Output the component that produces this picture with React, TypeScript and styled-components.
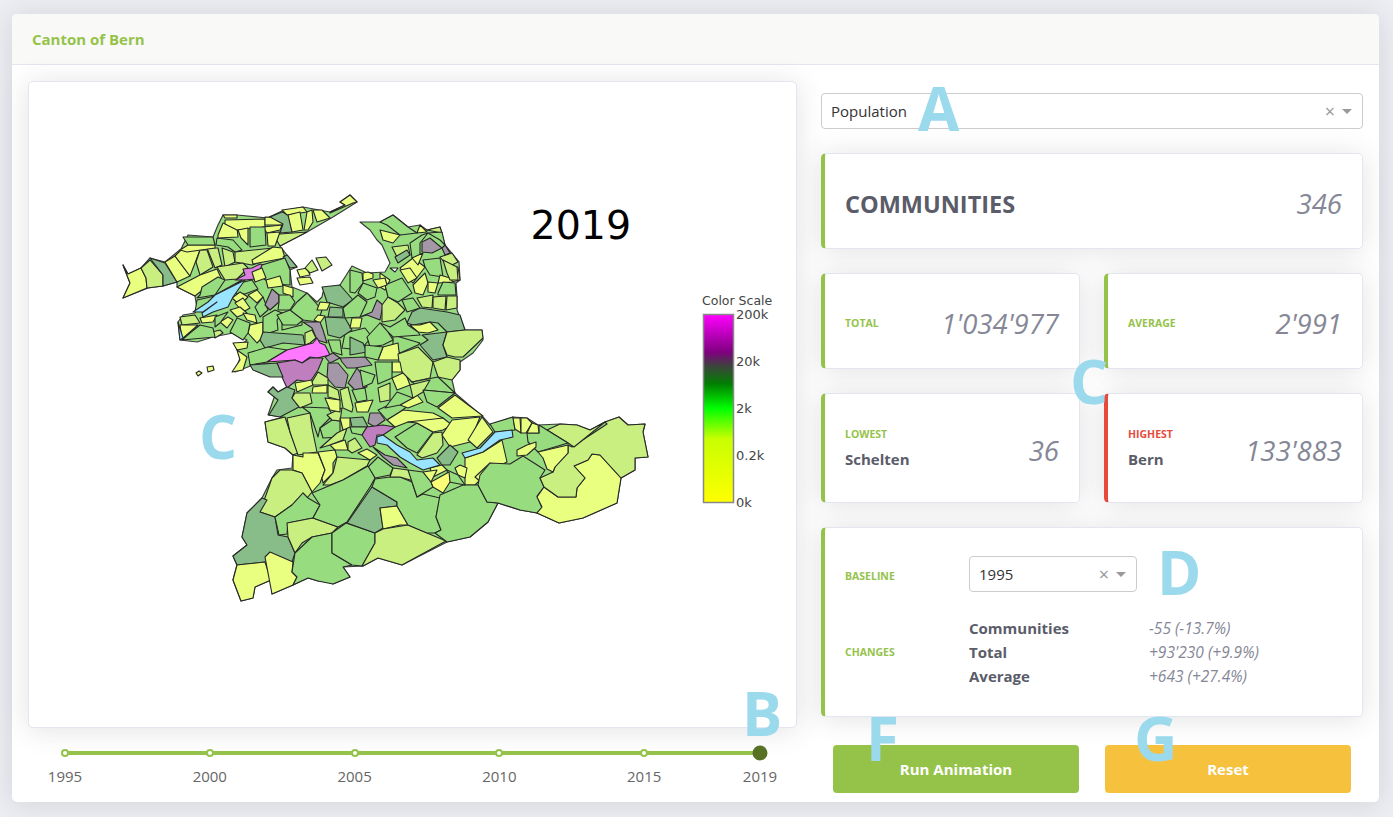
import React from 'react'
import styled, { createGlobalStyle } from 'styled-components'

const GREEN = '#95c34a'
const SANS = '"Open Sans", "Noto Sans", sans-serif'

const FILL: Record<string, string> = {
  y: '#e8ff80',
  b: '#fbff78',
  l: '#c8ef80',
  g: '#98dc80',
  d: '#88bc88',
  p: '#a498a8',
  m: '#bf7fbf',
  o: '#dc80e0',
  f: '#ff78ff',
  w: '#99e4ff',
  x: '#ffffff',
}

const OUTLINE =
  '123,265 128,274 141,268 150,258 165,262 181,249 188,235 213,237 218,225 223,215 237,215 267,218 282,211 303,207 330,212 345,205 340,202 350,195 357,202 333,217 307,232 280,246 287,255 297,267 290,270 292,287 307,293 317,302 322,297 323,292 340,285 352,266 367,273 385,272 390,263 382,245 377,240 370,230 360,222 380,222 393,215 408,227 420,225 427,230 440,227 445,245 459,262 460,280 456,283 457,297 457,310 465,330 482,330 483,340 473,353 460,362 460,370 452,380 455,393 483,417 490,425 513,417 527,418 538,425 560,424 577,425 590,430 605,422 619,417 628,425 645,424 643,432 648,457 635,458 635,470 621,478 617,503 583,518 559,523 537,513 520,510 498,503 488,522 470,537 447,542 402,565 378,558 363,566 343,567 350,577 333,584 328,582 318,581 308,578 293,585 272,594 271,580 255,587 253,598 241,601 233,580 237,565 233,556 247,545 242,537 247,513 262,498 272,478 277,470 292,468 293,455 285,448 268,442 265,422 283,417 268,415 275,395 268,392 273,387 278,392 287,387 285,373 280,365 260,363 253,365 235,372 240,358 237,348 247,340 233,333 213,337 197,342 180,340 178,322 183,315 195,313 197,308 195,296 177,287 177,282 163,286 148,288 123,298 130,283'

const CELLS: [string, string][] = [
  // Jura
  ['y', '123,265 128,274 141,268 146,278 147,288 123,298 130,283'],
  ['l', '141,268 150,260 163,275 163,286 147,288 146,278'],
  ['d', '150,258 165,263 177,282 163,286 163,275'],
  ['y', '165,262 175,256 190,276 177,282'],
  ['y', '175,256 181,250 200,250 190,276'],
  ['l', '200,250 207,250 213,267 200,275 196,262'],
  ['l', '207,248 218,248 222,265 215,268'],
  ['l', '222,248 233,252 235,262 225,267'],
  ['y', '180,250 188,245 215,245 215,248 187,252'],
  ['g', '183,237 213,237 215,245 188,245'],
  ['g', '217,238 233,240 242,250 235,252 228,247 216,245'],
  ['y', '218,235 223,223 237,228 238,237 218,238'],
  ['y', '223,215 237,215 237,218 225,218'],
  ['y', '225,220 265,219 265,227 237,230 225,224'],
  ['y', '265,217 285,218 283,225 265,225'],
  ['y', '263,227 282,225 280,230 267,233'],
  ['d', '270,217 282,212 289,215 292,232 280,233 283,224'],
  ['y', '282,210 303,207 307,212 287,215'],
  ['y', '288,215 300,212 303,230 292,232'],
  ['y', '307,212 312,210 313,222 308,230 304,230'],
  ['y', '313,210 322,210 330,218 317,222'],
  ['y', '330,213 353,203 357,202 350,195 340,202 345,205 330,212'],
  ['l', '280,234 307,232 280,246 273,234'],
  ['g', '250,227 265,227 266,245 250,247'],
  ['y', '238,230 248,228 248,245 241,238'],
  ['y', '267,233 280,232 275,246 268,246'],
  ['l', '235,252 273,248 275,257 252,265 235,262'],
  ['y', '273,247 282,248 285,258 253,264 252,260'],
  ['d', '287,255 297,267 290,268 283,257'],
  ['y', '177,287 200,275 217,269 222,280 200,292 195,296'],
  ['g', '200,295 202,287 218,277 225,280 215,295 197,298'],
  ['l', '217,267 243,263 248,268 237,279 225,280'],
  ['o', '235,280 245,275 243,269 252,268 260,264 269,266 265,273 255,279 245,280'],
  ['l', '215,295 242,280 228,293 217,296'],
  ['g', '197,300 215,296 205,308 195,312'],
  // Exclave and Seeland
  ['y', '297,270 307,268 310,275 300,277'],
  ['y', '297,278 310,277 313,283 300,285'],
  ['l', '305,268 312,260 318,270 310,273'],
  ['l', '316,258 326,257 332,265 322,271'],
  ['g', '262,265 285,258 290,270 290,285 272,284 258,275'],
  ['y', '252,272 262,268 266,278 255,282'],
  ['y', '266,280 280,276 283,286 268,288'],
  ['g', '236,284 252,280 258,289 245,294 233,293'],
  ['y', '232,298 240,292 248,297 240,305'],
  ['y', '235,303 243,298 250,308 243,312'],
  ['y', '248,295 257,290 263,297 257,303'],
  ['y', '230,310 240,307 247,313 237,317'],
  ['g', '255,307 263,297 268,310 260,317'],
  ['y', '243,313 255,315 257,323 247,320'],
  ['y', '228,317 233,320 227,328 220,322'],
  ['l', '212,332 220,330 223,333 215,338'],
  ['l', '180,317 195,315 200,323 182,325'],
  ['y', '180,325 198,325 182,339'],
  ['g', '200,325 213,328 215,337 182,340 190,333'],
  ['y', '200,318 217,315 213,322 202,323'],
  ['g', '215,317 228,312 220,323 215,327'],
  ['y', '250,325 263,322 263,337 257,343 248,333'],
  ['g', '237,318 250,323 248,333 243,340 230,332'],
  ['g', '263,317 275,310 282,313 277,320 278,330 263,335 263,323'],
  ['g', '282,313 302,314 302,325 282,330'],
  ['y', '233,343 248,342 247,348 237,350'],
  ['y', '237,350 247,357 243,370 232,372 240,360'],
  ['y', '196,373 199,371 202,373 198,376'],
  ['y', '207,367 213,366 214,370 208,372'],
  // Bern area
  ['p', '272,289 279,295 279,302 270,310 265,305'],
  ['y', '283,285 293,288 293,297 283,293'],
  ['g', '279,295 290,295 295,302 290,310 278,310 279,302'],
  ['g', '297,302 307,293 322,310 318,322 303,320 290,311'],
  ['d', '322,287 340,285 353,300 343,307 327,302'],
  ['d', '330,307 343,308 343,317 328,317'],
  ['y', '320,302 330,303 327,310 317,310'],
  ['y', '318,315 325,316 320,323 314,320'],
  ['p', '303,322 320,322 323,330 327,343 317,340 312,328'],
  ['g', '277,315 290,310 303,320 297,325 283,325'],
  ['d', '263,332 303,335 305,345 283,343 265,348 260,340'],
  ['l', '305,333 312,330 316,338 310,343 305,345'],
  ['g', '248,353 268,347 287,350 267,362 250,365'],
  ['f', '267,362 287,350 313,343 317,338 320,343 325,345 330,355 317,358 310,357 302,363 295,360'],
  ['m', '277,363 295,360 302,363 310,358 323,358 318,370 310,382 297,380 287,388 282,377'],
  ['d', '250,365 277,363 283,377 270,377 253,370'],
  ['p', '328,363 338,363 348,375 345,388 335,387 327,378'],
  ['p', '325,357 333,353 340,358 330,363'],
  ['p', '342,362 340,358 365,357 372,365 355,368 347,368'],
  ['p', '348,383 357,368 362,375 367,387 355,390'],
  ['g', '345,333 365,328 372,337 360,350 342,348'],
  ['d', '325,317 345,318 352,330 340,338 328,335'],
  ['g', '328,340 340,340 342,355 332,352'],
  ['g', '343,308 358,295 367,302 360,317 345,318'],
  ['y', '352,318 362,318 360,328 350,328'],
  // Centre
  ['d', '268,392 273,387 278,392 287,387 295,390 292,398 299,407 280,417 269,415 278,400'],
  ['l', '295,393 310,393 312,403 300,408 292,398'],
  ['y', '295,383 312,380 313,385 297,392'],
  ['l', '312,382 318,372 328,378 328,385 313,385'],
  ['y', '313,387 327,385 327,393 312,393'],
  ['g', '302,407 328,408 333,415 320,428 318,437 310,413'],
  ['g', '320,428 332,420 340,421 340,437 323,438'],
  ['l', '327,415 342,408 340,421 332,420'],
  ['l', '340,390 348,387 353,407 352,412 343,408'],
  ['l', '328,385 338,390 340,400 328,397'],
  ['y', '325,398 340,400 340,412 330,410'],
  ['g', '352,390 365,388 367,400 357,402'],
  ['y', '355,403 373,400 368,412 357,412'],
  ['g', '360,370 375,375 372,383 363,387'],
  ['l', '378,388 390,383 390,400 380,402'],
  ['l', '320,448 337,433 347,428 343,440 330,445'],
  ['y', '330,445 345,440 348,450 335,450'],
  ['l', '348,442 355,438 362,448 352,453 348,450'],
  ['y', '358,453 367,449 377,455 370,460'],
  ['d', '350,418 363,417 368,427 352,427'],
  ['g', '350,427 367,427 362,435 352,433'],
  ['y', '340,418 350,418 350,427 343,430'],
  ['g', '378,410 400,400 413,402 400,412 387,420'],
  ['y', '387,420 403,410 433,413 443,418 423,422 408,422 395,427'],
  ['y', '400,405 417,395 423,402 408,408'],
  ['y', '392,378 405,372 410,385 397,390'],
  // North east
  ['g', '380,222 393,215 408,227 417,233 400,235 387,225'],
  ['y', '417,233 420,225 427,232'],
  ['l', '427,230 440,227 442,233'],
  ['g', '428,233 442,232 445,245 440,240'],
  ['p', '422,242 430,238 442,248 432,253 422,252'],
  ['p', '442,248 445,245 450,253 445,255'],
  ['g', '410,243 422,235 428,233 420,243 420,257 412,258'],
  ['y', '380,230 400,235 393,243 383,240'],
  ['l', '392,247 408,245 410,255 397,257'],
  ['d', '395,257 407,250 410,255 398,263'],
  ['l', '440,257 452,253 458,262 448,267'],
  ['g', '423,260 440,258 443,277 430,275 425,267'],
  ['y', '448,268 458,267 460,280 451,282'],
  ['y', '400,268 413,258 425,267 413,283 407,277'],
  ['y', '412,258 423,253 418,265'],
  ['y', '380,273 390,280 385,290 380,287'],
  ['x', '390,268 398,268 395,272'],
  // Emmental
  ['p', '360,317 372,312 377,300 383,305 380,320 367,315'],
  ['l', '382,305 388,297 398,303 405,310 395,320 382,322'],
  ['g', '385,285 402,278 412,293 398,302 388,297'],
  ['g', '363,283 377,288 375,297 367,300 358,293'],
  ['y', '373,280 385,278 387,285 378,288'],
  ['y', '363,273 368,272 373,274 373,278 363,281'],
  ['g', '350,270 362,273 363,283 355,293 350,292'],
  ['y', '410,268 417,278 408,283 400,270'],
  ['y', '413,285 425,273 428,283 423,295 415,293'],
  ['y', '428,282 438,283 435,293 428,292'],
  ['y', '440,275 450,278 453,282 438,283'],
  ['l', '443,260 457,267 458,280 450,280 447,273'],
  ['g', '438,293 443,282 455,283 456,295 438,295'],
  ['l', '433,297 446,296 445,310 433,308'],
  ['l', '447,296 457,296 457,308 446,310'],
  ['l', '417,298 433,295 432,308 422,307'],
  ['g', '402,300 413,298 420,308 407,312'],
  ['d', '407,323 412,312 420,308 447,312 460,315 465,330 447,332 438,323 430,322 413,325'],
  ['y', '410,325 420,325 430,322 438,330 428,333 418,332'],
  ['d', '422,335 447,332 443,345 447,357 433,360 420,345 428,340'],
  ['l', '447,332 465,330 482,330 483,338 463,357 455,357 447,355 443,345'],
  ['g', '393,335 420,343 418,345 400,353 393,347'],
  ['g', '380,323 390,327 405,318 408,325 418,332 420,335 393,337 388,332'],
  ['d', '350,337 363,343 367,352 350,355'],
  ['g', '367,337 380,323 388,332 393,340 383,345 370,347'],
  ['y', '383,347 398,343 400,360 378,360'],
  ['l', '398,354 418,347 433,362 430,378 412,382 400,370'],
  ['l', '447,357 460,360 460,370 452,380 438,377 433,362'],
  ['g', '412,382 438,377 455,393 423,390'],
  ['y', '392,362 400,362 402,372 392,372'],
  ['g', '365,345 383,347 378,360 365,357'],
  ['g', '375,362 392,362 392,378 378,384'],
  ['l', '410,385 430,380 423,392 413,398'],
  ['g', '397,392 413,398 400,405 385,408'],
  // Thun and the Oberland
  ['g', '395,437 417,423 433,432 417,453 407,448'],
  ['y', '408,422 443,418 452,425 443,430 433,432 417,423'],
  ['l', '417,455 433,433 442,432 443,445 437,453 422,458'],
  ['y', '442,435 452,420 480,417 470,442 450,447'],
  ['g', '423,390 455,393 437,407 427,402'],
  ['y', '438,408 455,395 483,416 452,418'],
  ['y', '482,417 493,432 477,448 468,440'],
  ['g', '490,424 513,417 515,430 495,432'],
  ['d', '437,458 450,445 458,452 450,465 442,465'],
  ['y', '430,468 442,465 447,470 433,477'],
  ['y', '465,458 483,452 502,440 507,462 490,470 475,485 465,485'],
  ['y', '455,468 460,465 467,468 465,478 458,475'],
  ['y', '475,477 490,463 490,473 482,483'],
  ['g', '368,467 378,457 393,468 390,475 375,478'],
  ['p', '370,413 380,413 385,420 375,427 368,423'],
  ['m', '362,435 367,427 383,425 395,427 383,435 377,435 375,445 370,447'],
  ['p', '373,447 385,455 397,458 407,468 393,465 383,457'],
  ['l', '265,422 285,417 290,432 298,453 293,455 285,448 268,442'],
  ['l', '287,418 310,413 312,428 317,452 298,455 290,432'],
  ['y', '293,455 303,457 303,453 318,453 325,470 320,483 312,492 302,473 293,470'],
  ['y', '318,452 335,450 337,457 333,463 333,473 323,483 322,478 325,470'],
  ['l', '337,457 370,460 367,466 343,480 330,485 323,485 333,473'],
  ['l', '272,478 280,470 292,470 302,473 312,492 307,498 303,493 292,505 275,517 260,512'],
  ['d', '247,513 262,498 267,500 260,512 275,517 278,535 288,537 295,553 292,562 265,562 237,565 233,556 247,545 242,537'],
  ['g', '275,517 292,505 303,493 308,498 320,505 313,518 288,523 287,534 279,535'],
  ['l', '287,523 313,518 338,527 332,533 312,537 302,543 295,553 288,537'],
  ['y', '233,580 237,565 265,562 271,580 255,587 253,598 241,601'],
  ['y', '265,557 270,552 293,562 292,572 297,577 293,585 272,594'],
  ['g', '295,553 312,537 332,533 332,553 352,565 343,567 350,577 333,584 318,581 308,578 293,585 297,577 292,572'],
  ['g', '312,493 343,480 368,466 375,478 370,487 347,522 338,527 313,518 320,505'],
  ['g', '332,533 346,523 375,533 375,543 362,566 352,565 332,553'],
  ['d', '347,523 372,487 397,502 397,506 380,508 383,528 375,533'],
  ['y', '380,508 397,506 408,525 400,525 383,529'],
  ['l', '362,566 375,543 375,533 383,529 408,525 427,533 446,541 402,565 378,558 363,566'],
  ['g', '372,487 375,479 390,477 400,477 412,482 417,497 423,494 440,498 436,517 441,530 435,533 427,533 408,525 397,506 397,502'],
  ['g', '440,495 463,485 478,485 487,502 498,503 488,522 470,537 447,542 435,533 441,530 436,517'],
  ['l', '393,468 408,470 417,482 400,477 390,477'],
  ['g', '408,470 423,472 431,482 433,487 417,497 412,482'],
  ['y', '423,472 437,470 431,482'],
  ['g', '447,470 458,475 465,485 449,482'],
  ['b', '431,482 449,472 450,482 443,493 433,487'],
  ['g', '478,485 487,502 498,503 520,510 537,513 542,508 537,496 544,487 540,478 545,470 523,456 510,464 490,463 480,475'],
  ['y', '537,497 544,487 558,497 576,497 577,488 585,478 574,466 588,460 592,454 600,455 621,478 617,503 583,518 559,523 537,513 542,507'],
  ['l', '572,447 607,424 605,422 619,417 628,425 645,424 643,432 648,457 635,458 635,470 621,478 600,455 592,454 588,460 574,466 585,478 577,488 576,497 558,497 544,487 540,478 553,472 555,467 568,453 568,445'],
  ['l', '547,430 560,424 577,425 590,430 605,422 574,447 568,443'],
  ['g', '539,425 547,430 568,443 538,452 528,442 527,433 539,433'],
  ['y', '513,418 520,418 521,433 515,429'],
  ['y', '521,418 527,418 532,423 526,433 521,433'],
  ['y', '532,423 538,425 539,433 527,433'],
  ['y', '538,452 568,445 568,453 555,467 553,472 547,469 543,458'],
  ['y', '517,450 527,445 536,442 536,447 527,455 517,456'],
  // Lakes
  ['w', '193,312 208,302 215,295 245,280 233,297 228,307 213,312 203,317 202,313 217,302 203,312'],
  ['w', '178,322 183,338 180,340'],
  ['w', '377,437 383,435 397,445 410,452 417,460 433,458 440,465 423,470 410,463 400,457 387,445 377,443'],
  ['w', '462,453 480,448 495,432 512,430 513,437 500,440 483,452 465,458'],
]

const YEARS = [1995, 2000, 2005, 2010, 2015, 2019]
const SCALE = [
  { label: '200k', y: 319 },
  { label: '20k', y: 366 },
  { label: '2k', y: 413 },
  { label: '0.2k', y: 460 },
  { label: '0k', y: 507 },
]
const CHANGES = [
  { name: 'Communities', value: "-55 (-13.7%)" },
  { name: 'Total', value: "+93'230 (+9.9%)" },
  { name: 'Average', value: "+643 (+27.4%)" },
]
const LETTERS = [
  { char: 'A', x: 918, y: 78 },
  { char: 'B', x: 742, y: 683 },
  { char: 'C', x: 199, y: 406 },
  { char: 'C', x: 1070, y: 351 },
  { char: 'D', x: 1157, y: 542 },
  { char: 'F', x: 866, y: 708 },
  { char: 'G', x: 1134, y: 708 },
]

const GlobalStyle = createGlobalStyle`
  body {
    margin: 0;
    background: #eceef3;
    font-family: ${SANS};
    color: #5a5c69;
  }
`

const Root = styled.div`
  position: relative;
  height: 817px;
  padding: 14px 14px 15px 12px;
  box-sizing: border-box;
`

const Page = styled.div`
  height: 100%;
  box-sizing: border-box;
  background: #fff;
  border-radius: 5px;
  box-shadow: 0 2px 28px 0 rgba(58, 59, 69, 0.15);
  display: flex;
  flex-direction: column;
`

const PageHeader = styled.div`
  height: 51px;
  box-sizing: border-box;
  flex: none;
  display: flex;
  align-items: center;
  padding-left: 20px;
  background: #f9f9f7;
  border-bottom: 1px solid #e3e6f0;
  border-radius: 5px 5px 0 0;
`

const Title = styled.div`
  color: ${GREEN};
  font-size: 15px;
  font-weight: 700;
`

const Body = styled.div`
  flex: 1;
  display: grid;
  grid-template-columns: 769px 542px;
  column-gap: 24px;
  padding: 16px 16px 0 16px;
`

const Card = styled.div<{ $accent?: string }>`
  box-sizing: border-box;
  background: #fff;
  border: 1px solid #e3e6f0;
  border-radius: 5px;
  box-shadow: 0 2px 28px 0 rgba(58, 59, 69, 0.15);
  ${(p) => p.$accent && `border-left: 4px solid ${p.$accent};`}
`

const MapCard = styled(Card)`
  height: 647px;
`

const MapSvg = styled.svg`
  display: block;
  width: 100%;
  height: 100%;
`

const Slider = styled.div`
  position: relative;
  height: 50px;
  margin: 23px 37px 0 37px;
`

const Rail = styled.div`
  height: 4px;
  background: ${GREEN};
`

const Mark = styled.div<{ $active: boolean }>`
  position: absolute;
  top: 2px;
  box-sizing: border-box;
  transform: translate(-50%, -50%);
  border-radius: 50%;
  width: ${(p) => (p.$active ? 15 : 8)}px;
  height: ${(p) => (p.$active ? 15 : 8)}px;
  background: ${(p) => (p.$active ? '#587225' : '#fff')};
  border: 2px solid ${(p) => (p.$active ? '#587225' : GREEN)};
`

const MarkLabel = styled.div`
  position: absolute;
  top: 15px;
  transform: translateX(-50%);
  font-size: 15px;
  line-height: 20px;
  color: #666;
`

const Side = styled.div`
  padding-top: 12px;
  display: flex;
  flex-direction: column;
  gap: 24px;
`

const SelectBox = styled.div<{ $width?: number }>`
  box-sizing: border-box;
  height: 36px;
  width: ${(p) => (p.$width ? `${p.$width}px` : '100%')};
  display: flex;
  align-items: center;
  padding: 0 10px 0 9px;
  background: #fff;
  border: 1px solid #ccc;
  border-radius: 4px;
  font-size: 15px;
  color: #333;
`

const SelectValue = styled.span`
  flex: 1;
`

const Clear = styled.span`
  color: #999;
  font-size: 18px;
  margin-right: 7px;
`

const Caret = styled.span`
  width: 0;
  height: 0;
  border-style: solid;
  border-width: 5px 5px 0;
  border-color: #999 transparent transparent;
`

const CommunitiesCard = styled(Card)`
  height: 96px;
  display: flex;
  align-items: center;
  justify-content: space-between;
  padding: 0 20px;
`

const BigTitle = styled.div`
  padding-top: 5px;
  font-size: 23.5px;
  font-weight: 700;
  color: #5a5c69;
`

const Value = styled.div`
  padding-top: 4px;
  font-size: 27.5px;
  font-style: italic;
  color: #858796;
`

const StatGrid = styled.div`
  display: grid;
  grid-template-columns: 259px 259px;
  grid-template-rows: 96px 110px;
  gap: 24px;
`

const StatCard = styled(Card)`
  display: flex;
  align-items: center;
  justify-content: space-between;
  padding: 0 20px;
`

const StatLabel = styled.div<{ $color?: string }>`
  font-size: 10.5px;
  font-weight: 700;
  text-transform: uppercase;
  color: ${(p) => p.$color || GREEN};
`

const SingleLabel = styled(StatLabel)`
  padding-top: 4px;
`

const StatName = styled.div`
  margin-top: 8px;
  font-size: 15px;
  font-weight: 700;
  color: #5a5c69;
`

const BaselineCard = styled(Card)`
  height: 190px;
  padding: 28px 20px 0;
  display: grid;
  grid-template-columns: 124px 1fr;
  grid-template-rows: 36px auto;
  row-gap: 24px;
  align-items: center;
  align-content: start;
`

const ChangeList = styled.div`
  display: grid;
  grid-template-columns: 180px 1fr;
  grid-auto-rows: 24px;
  align-items: center;
`

const ChangeName = styled.div`
  font-size: 15px;
  font-weight: 700;
  color: #5a5c69;
`

const ChangeValue = styled.div`
  font-size: 15.5px;
  font-style: italic;
  color: #858796;
`

const Buttons = styled.div`
  display: grid;
  grid-template-columns: 246px 246px;
  column-gap: 26px;
  padding: 4px 12px 0;
`

const Button = styled.button<{ $color: string }>`
  height: 48px;
  border: 0;
  border-radius: 4px;
  background: ${(p) => p.$color};
  color: #fff;
  font-family: ${SANS};
  font-size: 15px;
  font-weight: 700;
`

const Letter = styled.div<{ $x: number; $y: number }>`
  position: absolute;
  left: ${(p) => p.$x}px;
  top: ${(p) => p.$y}px;
  font-size: 60px;
  line-height: 60px;
  font-weight: 700;
  color: #9bd9ec;
`

function Select({ value, width }: { value: string; width?: number }) {
  return (
    <SelectBox $width={width}>
      <SelectValue>{value}</SelectValue>
      <Clear>×</Clear>
      <Caret />
    </SelectBox>
  )
}

function BernMap() {
  return (
    <MapSvg viewBox='29 82 767 645'>
      <defs>
        <linearGradient id='scale' x1='0' y1='0' x2='0' y2='1'>
          <stop offset='0' stopColor='#ff00ff' />
          <stop offset='0.2' stopColor='#800080' />
          <stop offset='0.27' stopColor='#404040' />
          <stop offset='0.37' stopColor='#008000' />
          <stop offset='0.5' stopColor='#00ff00' />
          <stop offset='0.66' stopColor='#c8ff00' />
          <stop offset='1' stopColor='#ffff00' />
        </linearGradient>
      </defs>
      <polygon points={OUTLINE} fill={FILL.g} stroke='#3a3a3a' strokeWidth='1.2' strokeLinejoin='round' />
      {CELLS.map(([c, pts], i) => (
        <polygon key={i} points={pts} fill={FILL[c]} stroke='#262626' strokeWidth='1.1' strokeLinejoin='round' />
      ))}
      <text x='530.5' y='238.5' fontFamily='"DejaVu Sans", sans-serif' fontSize='39.5' fill='#000'>
        2019
      </text>
      <text x='702' y='305' fontFamily='"DejaVu Sans", sans-serif' fontSize='12.5' fill='#444'>
        Color Scale
      </text>
      <rect x='703.5' y='314.5' width='30' height='188' fill='url(#scale)' stroke='#888' strokeWidth='1.5' />
      {SCALE.map((s) => (
        <text key={s.label} x='736' y={s.y} fontFamily='"DejaVu Sans", sans-serif' fontSize='13' fill='#444'>
          {s.label}
        </text>
      ))}
    </MapSvg>
  )
}

export default function App() {
  return (
    <Root>
      <GlobalStyle />
      <Page>
        <PageHeader>
          <Title>Canton of Bern</Title>
        </PageHeader>
        <Body>
          <div>
            <MapCard>
              <BernMap />
            </MapCard>
            <Slider>
              <Rail />
              {YEARS.map((year) => {
                const left = `${((year - 1995) / 24) * 100}%`
                return (
                  <React.Fragment key={year}>
                    <Mark $active={year === 2019} style={{ left }} />
                    <MarkLabel style={{ left }}>{year}</MarkLabel>
                  </React.Fragment>
                )
              })}
            </Slider>
          </div>
          <Side>
            <Select value='Population' />
            <CommunitiesCard $accent={GREEN}>
              <BigTitle>COMMUNITIES</BigTitle>
              <Value>346</Value>
            </CommunitiesCard>
            <StatGrid>
              <StatCard $accent={GREEN}>
                <SingleLabel>Total</SingleLabel>
                <Value>1'034'977</Value>
              </StatCard>
              <StatCard $accent={GREEN}>
                <SingleLabel>Average</SingleLabel>
                <Value>2'991</Value>
              </StatCard>
              <StatCard $accent={GREEN}>
                <div>
                  <StatLabel>Lowest</StatLabel>
                  <StatName>Schelten</StatName>
                </div>
                <Value>36</Value>
              </StatCard>
              <StatCard $accent='#e74a3b'>
                <div>
                  <StatLabel $color='#e74a3b'>Highest</StatLabel>
                  <StatName>Bern</StatName>
                </div>
                <Value>133'883</Value>
              </StatCard>
            </StatGrid>
            <BaselineCard $accent={GREEN}>
              <SingleLabel>Baseline</SingleLabel>
              <Select value='1995' width={168} />
              <StatLabel>Changes</StatLabel>
              <ChangeList>
                {CHANGES.map((c) => (
                  <React.Fragment key={c.name}>
                    <ChangeName>{c.name}</ChangeName>
                    <ChangeValue>{c.value}</ChangeValue>
                  </React.Fragment>
                ))}
              </ChangeList>
            </BaselineCard>
            <Buttons>
              <Button $color={GREEN}>Run Animation</Button>
              <Button $color='#f6c23e'>Reset</Button>
            </Buttons>
          </Side>
        </Body>
      </Page>
      {LETTERS.map((l, i) => (
        <Letter key={i} $x={l.x} $y={l.y}>
          {l.char}
        </Letter>
      ))}
    </Root>
  )
}
